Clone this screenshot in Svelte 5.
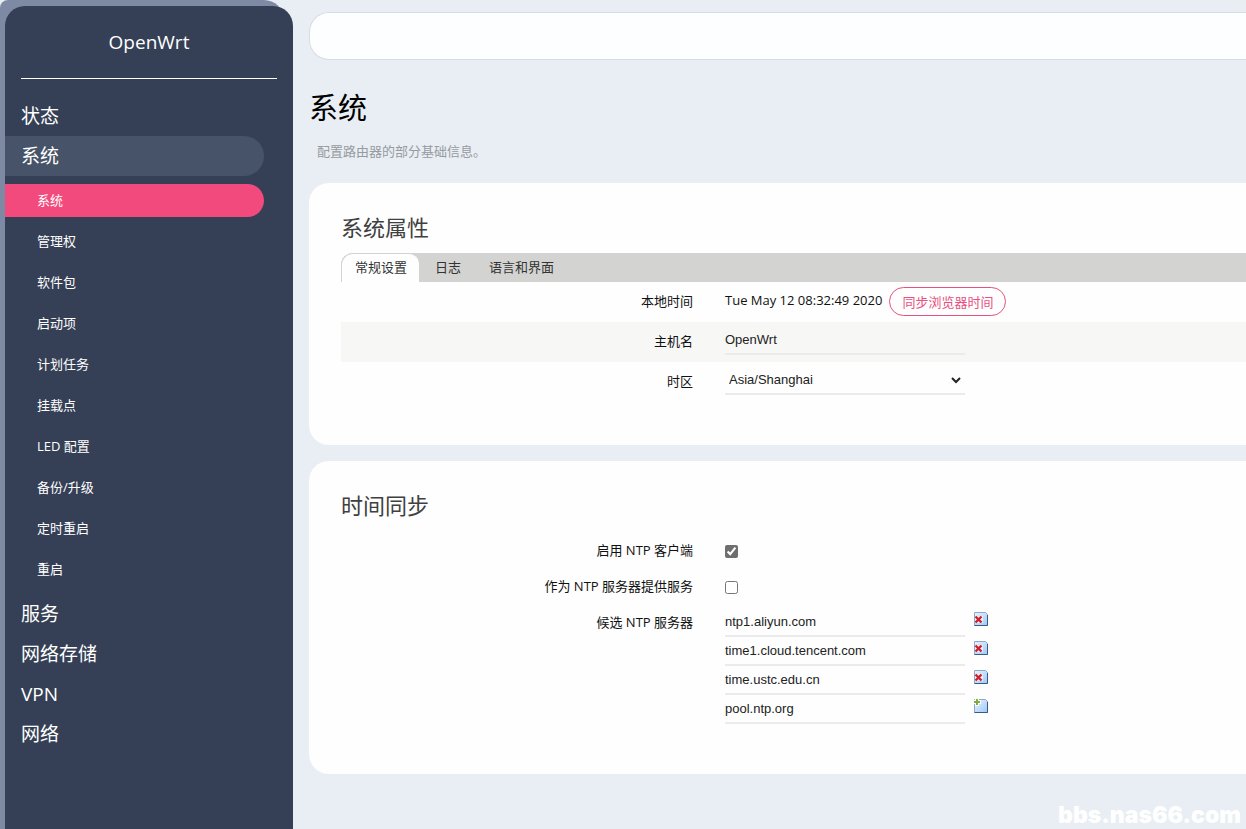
<script lang="ts">
    interface MenuItem {
        name: string;
        children?: string[];
    }

    const menu: MenuItem[] = [
        { name: "状态" },
        {
            name: "系统",
            children: [
                "系统",
                "管理权",
                "软件包",
                "启动项",
                "计划任务",
                "挂载点",
                "LED 配置",
                "备份/升级",
                "定时重启",
                "重启",
            ],
        },
        { name: "服务" },
        { name: "网络存储" },
        { name: "VPN" },
        { name: "网络" },
    ];

    const tabs = ["常规设置", "日志", "语言和界面"];

    let activeTab = $state(tabs[0]);
    let localTime = $state("Tue May 12 08:32:49 2020");
    let hostname = $state("OpenWrt");
    let timezone = $state("Asia/Shanghai");
    let ntpClient = $state(true);
    let ntpServer = $state(false);
    let servers = $state([
        "ntp1.aliyun.com",
        "time1.cloud.tencent.com",
        "time.ustc.edu.cn",
        "pool.ntp.org",
    ]);

    function syncTime() {
        localTime = new Date().toString().slice(0, 24);
    }

    function editServers(index: number) {
        if (index === servers.length - 1) {
            servers.push("");
        } else {
            servers.splice(index, 1);
        }
    }
</script>

<div class="layout">
    <div class="side-shell">
        <aside class="sidebar">
            <a class="brand" href="#home">OpenWrt</a>
            <nav>
                {#each menu as item (item.name)}
                    <a
                        href="#{item.name}"
                        class="menu-link"
                        class:open={item.children}>{item.name}</a
                    >
                    {#if item.children}
                        <div class="submenu">
                            {#each item.children as child, i (child)}
                                <a
                                    href="#{child}"
                                    class="sub-link"
                                    class:active={i === 0}>{child}</a
                                >
                            {/each}
                        </div>
                    {/if}
                {/each}
            </nav>
        </aside>
    </div>

    <main>
        <header class="topbar"></header>
        <h1>系统</h1>
        <p class="descr">配置路由器的部分基础信息。</p>

        <section class="card">
            <h2>系统属性</h2>
            <div class="tabs">
                {#each tabs as tab (tab)}
                    <button
                        class="tab"
                        class:active={activeTab === tab}
                        onclick={() => (activeTab = tab)}>{tab}</button
                    >
                {/each}
            </div>
            <div class="row">
                <span class="label">本地时间</span>
                <div class="field time">
                    <span>{localTime}</span>
                    <button class="sync" onclick={syncTime}
                        >同步浏览器时间</button
                    >
                </div>
            </div>
            <div class="row shaded">
                <label class="label" for="hostname">主机名</label>
                <div class="field">
                    <input
                        id="hostname"
                        class="control"
                        type="text"
                        bind:value={hostname}
                    />
                </div>
            </div>
            <div class="row">
                <label class="label" for="timezone">时区</label>
                <div class="field">
                    <span class="select">
                        <select
                            id="timezone"
                            class="control"
                            bind:value={timezone}
                        >
                            <option>Asia/Shanghai</option>
                            <option>UTC</option>
                        </select>
                        <svg viewBox="0 0 10 7" aria-hidden="true">
                            <path
                                d="M1 1l4 4 4-4"
                                fill="none"
                                stroke="#222"
                                stroke-width="2"
                            />
                        </svg>
                    </span>
                </div>
            </div>
        </section>

        <section class="card ntp">
            <h2>时间同步</h2>
            <div class="row check">
                <label class="label" for="ntp-client">启用 NTP 客户端</label>
                <div class="field">
                    <input
                        id="ntp-client"
                        type="checkbox"
                        bind:checked={ntpClient}
                    />
                </div>
            </div>
            <div class="row check">
                <label class="label" for="ntp-server"
                    >作为 NTP 服务器提供服务</label
                >
                <div class="field">
                    <input
                        id="ntp-server"
                        type="checkbox"
                        bind:checked={ntpServer}
                    />
                </div>
            </div>
            <div class="row check">
                <label class="label" for="server-0">候选 NTP 服务器</label>
                <div class="servers">
                    {#each servers as _, i}
                        <div class="server">
                            <input
                                id="server-{i}"
                                class="control"
                                type="text"
                                aria-label="候选 NTP 服务器"
                                bind:value={servers[i]}
                            />
                            <button
                                class="icon"
                                aria-label={i === servers.length - 1
                                    ? "添加"
                                    : "删除"}
                                onclick={() => editServers(i)}
                            >
                                <svg viewBox="0 0 14 14">
                                    <defs>
                                        <linearGradient
                                            id="page-{i}"
                                            x2="1"
                                            y2="1"
                                        >
                                            <stop
                                                offset="0"
                                                stop-color="#eaf4ff"
                                            />
                                            <stop
                                                offset="1"
                                                stop-color="#9cc8f8"
                                            />
                                        </linearGradient>
                                    </defs>
                                    <path
                                        d="M.5 .5h11l2 2v11H.5z"
                                        fill="url(#page-{i})"
                                        stroke="#8fa9cb"
                                    />
                                    <path
                                        d="M13.5 3v10.5H.5"
                                        fill="none"
                                        stroke="#3c5a80"
                                    />
                                    {#if i === servers.length - 1}
                                        <path
                                            d="M0 3h7M3 0v7"
                                            stroke="#fff"
                                            stroke-width="4"
                                        />
                                        <path
                                            d="M0 3h6M3 0v6"
                                            stroke="#7fae3a"
                                            stroke-width="2"
                                        />
                                    {:else}
                                        <path
                                            d="M1 4h8v7H1z"
                                            fill="#fff"
                                            opacity="0.6"
                                        />
                                        <path
                                            d="M1.5 4.5l6 6M7.5 4.5l-6 6"
                                            stroke="#cf1f2b"
                                            stroke-width="2.4"
                                        />
                                    {/if}
                                </svg>
                            </button>
                        </div>
                    {/each}
                </div>
            </div>
        </section>
    </main>
    <div class="site-mark">bbs.nas66.com</div>
</div>

<style>
    :global(body) {
        background: #e8eef3;
        font-family: "Open Sans", "Noto Sans CJK SC", sans-serif;
        font-size: 13px;
        color: #111;
    }

    .layout {
        position: relative;
        display: flex;
        min-height: 100vh;
        overflow: hidden;
    }

    .side-shell {
        display: flex;
        flex: none;
        width: 284px;
        box-sizing: border-box;
        padding: 6px 0 0 5px;
        background: #7e8aa4;
        border-radius: 8px 20px 0 0;
    }

    .sidebar {
        flex: none;
        width: 288px;
        background: #354056;
        border-radius: 20px 20px 0 0;
    }

    .sidebar a {
        display: block;
        color: #fff;
        text-decoration: none;
    }

    .sidebar .brand {
        margin: 0 16px 17px;
        border-bottom: 1px solid #fff;
        font-size: 19px;
        line-height: 72px;
        text-align: center;
    }

    .menu-link {
        margin-right: 29px;
        padding-left: 16px;
        border-radius: 0 20px 20px 0;
        font-size: 19px;
        line-height: 40px;
    }

    .menu-link.open {
        background: #475368;
    }

    .submenu {
        display: grid;
        gap: 8px;
        margin-right: 29px;
        padding: 8px 0;
    }

    .sub-link {
        padding-left: 32px;
        border-radius: 0 17px 17px 0;
        line-height: 33px;
    }

    .sub-link.active {
        background: #f24a7c;
    }

    main {
        flex: 1;
        min-width: 0;
        padding: 12px 0 0 25px;
    }

    .topbar {
        height: 46px;
        border: 1px solid #d8dde3;
        border-right: 0;
        border-radius: 20px 0 0 20px;
        background: #fdfeff;
    }

    h1,
    h2 {
        margin: 0;
        font-weight: 400;
    }

    h1 {
        margin-top: 28px;
        font-size: 29px;
        line-height: 40px;
        color: #000;
    }

    .descr {
        margin: 13px 0 22px 8px;
        line-height: 20px;
        color: #979b9f;
    }

    .card {
        box-sizing: border-box;
        min-height: 262px;
        margin-bottom: 16px;
        padding: 29px 0 42px 32px;
        border-radius: 20px 0 0 20px;
        background: #fdfefd;
    }

    h2 {
        margin-bottom: 11px;
        font-size: 22px;
        line-height: 30px;
        color: #404040;
    }

    .tabs {
        display: flex;
        height: 29px;
        border-radius: 12px 0 0 0;
        background: #d3d3d2;
    }

    .tab {
        padding: 0 12px 2px 16px;
        border: 0;
        background: none;
        color: #333;
        font: inherit;
        cursor: pointer;
    }

    .tab.active {
        padding: 0 12px 3px 13px;
        border: 1px solid #d3d3d2;
        border-width: 1px 0 0 1px;
        border-radius: 12px 10px 0 0;
        background: #fdfefd;
    }

    .row {
        display: grid;
        grid-template-columns: 352px 1fr;
        gap: 32px;
        min-height: 40px;
    }

    .row.shaded {
        background: #f7f7f6;
    }

    .label {
        line-height: 38px;
        text-align: right;
    }

    .field {
        display: flex;
        align-items: flex-start;
    }

    .time {
        gap: 7px;
        line-height: 37px;
    }

    .sync {
        height: 29px;
        margin-top: 5px;
        padding: 0 12px;
        border: 1px solid #e8507f;
        border-radius: 15px;
        background: none;
        color: #e8507f;
        font: inherit;
        line-height: 26px;
        cursor: pointer;
    }

    .control {
        width: 240px;
        height: 33px;
        box-sizing: border-box;
        padding: 3px 0 0;
        border: 0;
        border-bottom: 2px solid #ebebeb;
        background: none;
        color: #222;
        font-family: "Liberation Sans", "Noto Sans CJK SC", sans-serif;
        font-size: 13px;
        outline: none;
    }

    .select {
        position: relative;
    }

    select.control {
        appearance: none;
        padding-left: 4px;
    }

    .select svg {
        position: absolute;
        top: 15px;
        right: 4px;
        width: 10px;
        height: 7px;
        pointer-events: none;
    }

    .ntp {
        min-height: 313px;
    }

    .check {
        min-height: 36px;
    }

    .check .label {
        line-height: 36px;
    }

    .ntp h2 {
        margin-bottom: 12px;
    }

    input[type="checkbox"] {
        width: 13px;
        height: 13px;
        margin: 13px 0 0;
        accent-color: #6f6f6f;
    }

    .server {
        display: flex;
        gap: 9px;
        height: 29px;
    }

    .servers {
        padding-top: 4px;
    }

    .server .control {
        height: 29px;
        padding: 0;
    }

    .icon {
        width: 14px;
        height: 14px;
        margin-top: 4px;
        padding: 0;
        border: 0;
        background: none;
        cursor: pointer;
    }

    .icon svg {
        display: block;
    }

    .site-mark {
        position: absolute;
        right: 5px;
        bottom: 0;
        color: #fff;
        font-family: Inter, sans-serif;
        font-size: 23px;
        font-weight: 900;
        line-height: 28px;
    }
</style>
